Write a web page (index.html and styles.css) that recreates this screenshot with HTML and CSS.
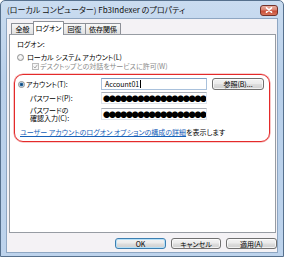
FILE: index.html
```html
<!DOCTYPE html>
<html lang="ja">
<head>
<meta charset="utf-8">
<title>プロパティ</title>
<link rel="stylesheet" href="styles.css">
</head>
<body>
<div class="window">
  <div class="titlebar">
    <span class="title">(ローカル コンピューター) Fb3Indexer のプロパティ</span>
    <div class="close"><svg width="8" height="6" viewBox="0 0 8 6"><path d="M1.5 0.8 L6.5 5.2 M6.5 0.8 L1.5 5.2" stroke="#fff" stroke-width="1.6" stroke-linecap="round"/></svg></div>
  </div>
  <div class="client">
    <div class="tabs">
      <div class="tab t1">全般</div>
      <div class="tab sel">ログオン</div>
      <div class="tab t3">回復</div>
      <div class="tab t4">依存関係</div>
    </div>
    <div class="panel">
      <div class="heading">ログオン:</div>
      <div class="opt"><span class="radio"></span>ローカル システム アカウント(L)</div>
      <div class="opt sub disabled"><span class="check"><svg width="5" height="5" viewBox="0 0 5 5"><path d="M0.6 2.6 L2 4 L4.4 0.8" stroke="#a9a9a9" stroke-width="1" fill="none"/></svg></span>デスクトップとの対話をサービスに許可(W)</div>
      <div class="highlight">
        <div class="grid">
          <div class="lbl"><span class="radio on"></span>アカウント(T):</div>
          <div class="field focus">Account01<span class="caret"></span></div>
          <button class="btn browse">参照(B)...</button>
          <div class="lbl ind">パスワード(P):</div>
          <div class="field pw">●●●●●●●●●●●●●●●●●●●●</div>
          <div></div>
          <div class="lbl ind two">パスワードの<br>確認入力(C):</div>
          <div class="field pw">●●●●●●●●●●●●●●●●●●●●</div>
        </div>
        <div class="link"><a>ユーザー アカウントのログオン オプションの構成の詳細</a>を表示します</div>
      </div>
    </div>
    <div class="actions">
      <button class="btn default w51">OK</button>
      <button class="btn w50">キャンセル</button>
      <button class="btn w51">適用(A)</button>
    </div>
  </div>
</div>
</body>
</html>
```

FILE: styles.css
```css
* { box-sizing: border-box; }
html, body { margin: 0; padding: 0; }
body {
  width: 284px;
  height: 258px;
  overflow: hidden;
  background: #ffffff;
  font-family: "Noto Sans CJK JP", "Noto Sans", sans-serif;
  font-size: 7px;
  font-feature-settings: "palt";
  color: #000;
}
.window {
  width: 284px;
  height: 257px;
  border: 1px solid #56708d;
  border-radius: 5px 5px 0 0;
  background: linear-gradient(#cadcf0, #b9d0ea 30%, #bdd3ec);
  padding: 0 5px 3px 5px;
  display: flex;
  flex-direction: column;
}
.titlebar {
  height: 17px;
  display: flex;
  align-items: center;
  justify-content: space-between;
  padding-left: 1px;
}
.title {
  font-size: 8px;
  line-height: 10px;
  color: #111;
  margin-top: 1px;
}
.close {
  width: 18px;
  height: 11px;
  margin-top: 1px;
  border: 1px solid #73322a;
  border-radius: 3px;
  background: linear-gradient(#eab0a2, #d9816f 45%, #c84b36 55%, #d8765c);
  display: flex;
  align-items: center;
  justify-content: center;
}
.client {
  flex: 1;
  background: #f4f2f5;
  border: 1px solid #8ea6c2;
  padding: 2px 0 3px 2px;
  display: flex;
  flex-direction: column;
}
.tabs {
  height: 14px;
  display: flex;
  align-items: flex-end;
  padding-left: 2px;
}
.tab {
  height: 12px;
  border: 1px solid #8d9097;
  border-bottom: none;
  border-radius: 1px 1px 0 0;
  background: linear-gradient(#f7f7f7, #ebebeb 50%, #dedede);
  display: flex;
  align-items: center;
  justify-content: center;
  line-height: 9px;
  margin-right: -1px;
}
.t1 { width: 23px; }
.t3 { width: 23px; }
.t4 { width: 36px; }
.tab.sel {
  width: 31px;
  height: 14px;
  background: #fff;
  position: relative;
  z-index: 1;
  padding-bottom: 1px;
}
.panel {
  flex: 1;
  margin-top: -1px;
  margin-right: 1px;
  background: #fff;
  border: 1px solid #979ca3;
  padding: 5px 5px 0 2px;
}
.heading {
  line-height: 9px;
  padding-left: 5px;
}
.opt {
  display: flex;
  align-items: center;
  line-height: 9px;
  height: 9px;
  padding-left: 5px;
  margin-top: 4px;
}
.opt.sub {
  margin-top: 0;
  padding-left: 20px;
}
.disabled { color: #8a8a8a; }
.radio {
  width: 7px;
  height: 7px;
  flex: none;
  border-radius: 50%;
  border: 1px solid #8e8f8f;
  background: radial-gradient(circle at 50% 40%, #ffffff, #dcdcdc);
  margin-right: 3px;
}
.radio.on {
  background: radial-gradient(circle, #143e66 0, #2b6ca6 1.4px, #cfe0ee 2.2px, #f1f1f1 100%);
  margin-right: 1px;
}
.check {
  width: 7px;
  height: 7px;
  flex: none;
  border: 1px solid #bcbcbc;
  background: #f6f6f6;
  margin-right: 1px;
  display: flex;
  align-items: center;
  justify-content: center;
}
.highlight {
  margin: 3px 0 0 2px;
  border: 1px solid #e42a2a;
  box-shadow: 0 0 0 0.6px rgba(228, 42, 42, 0.45);
  border-radius: 9px;
  padding: 3px 0 4px 3px;
}
.grid {
  display: grid;
  grid-template-columns: 78px 106px 52px;
  column-gap: 5px;
  row-gap: 2px;
  align-items: center;
}
.lbl {
  display: flex;
  align-items: center;
  line-height: 8px;
  white-space: nowrap;
}
.lbl.ind { padding-left: 12px; }
.lbl.two { display: block; line-height: 8px; }
.field {
  height: 12px;
  border: 1px solid #dfe4ea;
  border-top-color: #abb0b8;
  background: #fff;
  line-height: 10px;
  padding-left: 3px;
  overflow: hidden;
  white-space: nowrap;
  display: flex;
  align-items: center;
}
.field.focus {
  border-color: #a9c1dc;
  border-top-color: #7f9dc2;
}
.caret {
  display: inline-block;
  width: 1px;
  height: 8px;
  background: #000;
  margin-left: 1px;
}
.field.pw {
  padding-left: 1px;
  font-size: 7.3px;
  letter-spacing: -1.6px;
  font-feature-settings: normal;
}
.btn {
  font-family: inherit;
  font-size: 7px;
  font-feature-settings: "palt";
  color: #000;
  height: 12px;
  padding: 0;
  line-height: 9px;
  border: 1px solid #707070;
  border-radius: 3px;
  background: linear-gradient(#f3f3f3, #ebebeb 45%, #dddddd 55%, #cfcfcf);
  box-shadow: inset 0 0 0 1px rgba(255, 255, 255, 0.7);
}
.browse { width: 52px; }
.link {
  margin-top: 6px;
  line-height: 9px;
  padding-left: 2px;
  white-space: nowrap;
}
.link a {
  color: #1560b8;
  text-decoration: underline;
}
.actions {
  display: flex;
  justify-content: flex-end;
  gap: 5px;
  margin-top: 5px;
  height: 11px;
}
.actions .btn { height: 11px; line-height: 8px; }
.w51 { width: 51px; }
.w50 { width: 50px; }
.btn.default {
  border-color: #3c7fb1;
  box-shadow: inset 0 0 0 1px #b7e0f7;
}
```
